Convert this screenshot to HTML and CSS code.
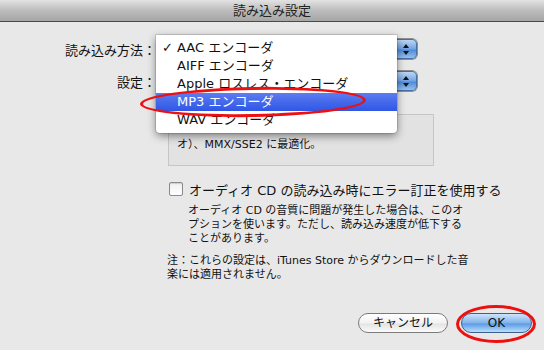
FILE: index.html
```html
<!DOCTYPE html>
<html lang="ja">
<head>
    <meta charset="UTF-8">
    <title>読み込み設定</title>
    <link rel="stylesheet" href="styles.css">
</head>
<body>
    <div class="dialog">
        <div class="titlebar">読み込み設定</div>
        <div class="content">
            <div class="formrow">
                <div class="label">読み込み方法：</div>
                <div class="popup"><span class="stepper"><i class="up"></i><i class="down"></i></span></div>
            </div>
            <div class="formrow second">
                <div class="label">設定：</div>
                <div class="popup"><span class="stepper"><i class="up"></i><i class="down"></i></span></div>
            </div>
            <div class="infobox">
                <div class="infoline">&nbsp;</div>
                <div class="infoline">オ）、MMX/SSE2 に最適化。</div>
            </div>
            <div class="checkrow">
                <span class="checkbox"></span>
                <span class="checklabel">オーディオ CD の読み込み時にエラー訂正を使用する</span>
            </div>
            <div class="desc">
                オーディオ CD の音質に問題が発生した場合は、このオ<br>
                プションを使います。ただし、読み込み速度が低下する<br>
                ことがあります。
            </div>
            <div class="note">
                注：これらの設定は、iTunes Store からダウンロードした音<br>
                楽には適用されません。
            </div>
            <div class="buttons">
                <button class="btn cancel">キャンセル</button>
                <button class="btn ok">OK</button>
            </div>
        </div>

        <!-- open popup menu -->
        <div class="menu">
            <div class="item"><span class="check">✓</span>AAC エンコーダ</div>
            <div class="item">AIFF エンコーダ</div>
            <div class="item">Apple ロスレス・エンコーダ</div>
            <div class="item selected">MP3 エンコーダ</div>
            <div class="item">WAV エンコーダ</div>
        </div>

        <!-- red marks -->
        <div class="mark mark-mp3"></div>
        <div class="mark mark-ok"></div>
    </div>
</body>
</html>
```

FILE: styles.css
```css
body {
    margin: 0;
    font-family: "DejaVu Sans", "Noto Sans CJK JP", sans-serif;
    color: #111;
}
.dialog {
    position: relative;
    width: 544px;
    height: 350px;
    background-color: #e8e8e8;
    overflow: hidden;
}
.titlebar {
    height: 21px;
    line-height: 21px;
    border-bottom: 1px solid #4a4a4a;
    background: linear-gradient(#e2e2e2, #bcbcbc 50%, #a6a6a6);
    text-align: center;
    font-size: 13px;
    color: #222;
}
.content {
    padding-top: 17px;
}
.formrow {
    display: flex;
    align-items: center;
    height: 20px;
}
.formrow.second {
    margin-top: 12px;
}
.label {
    width: 156px;
    text-align: right;
    font-size: 13px;
}
.popup {
    margin-left: 4px;
    width: 257px;
    height: 20px;
    border-radius: 5px;
    background: linear-gradient(#ffffff, #ececec);
    box-shadow: 0 0 0 1px #8e8e8e;
    display: flex;
    justify-content: flex-end;
}
.stepper {
    width: 22px;
    height: 20px;
    border-radius: 0 5px 5px 0;
    background: linear-gradient(#c4dcf6, #6fa4e2 50%, #4f8ad8 55%, #9cc8f4);
    box-shadow: inset 0 0 0 1px #4a6f9e;
    display: flex;
    flex-direction: column;
    align-items: center;
    justify-content: center;
    gap: 3px;
}
.up {
    border-left: 3px solid transparent;
    border-right: 3px solid transparent;
    border-bottom: 4px solid #111;
}
.down {
    border-left: 3px solid transparent;
    border-right: 3px solid transparent;
    border-top: 4px solid #111;
}
.infobox {
    margin: 23px 0 0 168px;
    width: 256px;
    height: 50px;
    border: 1px solid #c6c6c6;
    background-color: #e2e2e2;
    padding: 0 0 0 8px;
    font-size: 11px;
}
.infoline {
    height: 16px;
    line-height: 16px;
    margin-top: 4px;
}
.infoline + .infoline {
    margin-top: 2px;
}
.checkrow {
    display: flex;
    align-items: center;
    margin: 15px 0 0 169px;
    height: 16px;
}
.checkbox {
    width: 12px;
    height: 12px;
    border: 1px solid #8a8a8a;
    border-radius: 2px;
    background: linear-gradient(#f0f0f0, #ffffff);
    box-shadow: inset 0 1px 1px rgba(0,0,0,0.15);
}
.checklabel {
    margin-left: 6px;
    font-size: 13px;
}
.desc {
    margin: 7px 0 0 188px;
    font-size: 11px;
    line-height: 14px;
}
.note {
    margin: 8px 0 0 167px;
    font-size: 11px;
    line-height: 14px;
}
.buttons {
    display: flex;
    margin: 31px 0 0 358px;
    gap: 13px;
}
.btn {
    height: 20px;
    border-radius: 10px;
    font-family: "DejaVu Sans", "Noto Sans CJK JP", sans-serif;
    font-size: 12px;
    line-height: 18px;
    padding: 0;
    color: #111;
}
.cancel {
    width: 90px;
    border: 1px solid #7b7b7b;
    background: linear-gradient(#ffffff, #f2f2f2 50%, #e4e4e4 55%, #fbfbfb);
}
.ok {
    width: 71px;
    border: 1px solid #3f5f8c;
    background: linear-gradient(#cfe4fa, #7fb2ec 50%, #5d9be6 55%, #b8e0fb);
}
.menu {
    position: absolute;
    left: 156px;
    top: 35px;
    width: 241px;
    padding: 4px 0;
    background-color: #ffffff;
    border-radius: 0 0 4px 4px;
    box-shadow: 0 3px 8px rgba(0,0,0,0.45), 0 0 0 1px rgba(0,0,0,0.12);
    font-size: 13px;
}
.item {
    height: 18px;
    line-height: 18px;
    padding-left: 21px;
    position: relative;
}
.item .check {
    position: absolute;
    left: 6px;
}
.item.selected {
    background: linear-gradient(#5c7cf0, #2f56e6);
    color: #ffffff;
}
.mark {
    position: absolute;
    border: 3px solid #ee1010;
    border-radius: 50%;
}
.mark-mp3 {
    left: 140px;
    top: 87px;
    width: 220px;
    height: 24px;
    transform: rotate(-1deg);
}
.mark-ok {
    left: 456px;
    top: 305px;
    width: 74px;
    height: 32px;
}
```
